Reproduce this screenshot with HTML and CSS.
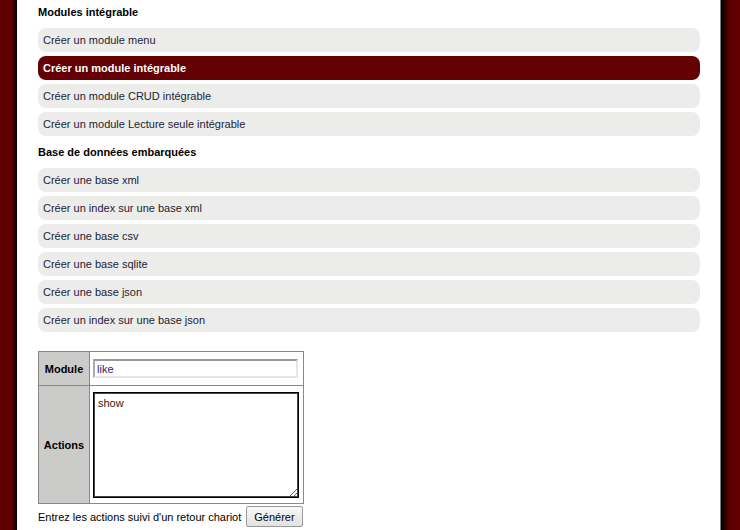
FILE: index.html
```html
<!DOCTYPE html>
<html lang="fr">
  <head>
    <meta charset="utf-8" />
    <title>Modules</title>
    <link rel="stylesheet" href="styles.css">
  </head>
  <body>
    <div class="page">
      <h3>Modules intégrable</h3>
      <ul class="menu">
        <li><a href="#">Créer un module menu</a></li>
        <li class="active"><a href="#">Créer un module intégrable</a></li>
        <li><a href="#">Créer un module CRUD intégrable</a></li>
        <li><a href="#">Créer un module Lecture seule intégrable</a></li>
      </ul>
      <h3>Base de données embarquées</h3>
      <ul class="menu">
        <li><a href="#">Créer une base xml</a></li>
        <li><a href="#">Créer un index sur une base xml</a></li>
        <li><a href="#">Créer une base csv</a></li>
        <li><a href="#">Créer une base sqlite</a></li>
        <li><a href="#">Créer une base json</a></li>
        <li><a href="#">Créer un index sur une base json</a></li>
      </ul>

      <form class="gen-form">
        <table class="form-table">
          <tr class="row-module">
            <th>Module</th>
            <td><input type="text" value="like"></td>
          </tr>
          <tr class="row-actions">
            <th>Actions</th>
            <td><textarea>show</textarea></td>
          </tr>
        </table>
        <div class="form-foot">
          <span>Entrez les actions suivi d'un retour chariot</span>
          <button type="button">Générer</button>
        </div>
      </form>
    </div>
  </body>
</html>
```

FILE: styles.css
```css
html, body {
     margin: 0;
     padding: 0;
     height: 100%;
}

body {
     background: linear-gradient(to right, #600000 0px, #600000 12px, #000 17px, #fff 17px, #fff 720px, #000 721px, #600000 730px, #600000 100%);
     font-family: "Liberation Sans", Arial, sans-serif;
     font-size: 11px;
     color: #1e2233;
     overflow: hidden;
}

.page {
     margin: 0 40px 0 38px;
     padding-top: 5px;
}

h3 {
     margin: 0;
     font-size: 11px;
     font-weight: bold;
     color: #000;
     line-height: 14px;
}

h3 + .menu {
     margin-top: 9px;
}

.menu {
     list-style: none;
     margin: 0 0 9px 0;
     padding: 0;
     display: flex;
     flex-direction: column;
     gap: 4px;
}

.menu li a {
     display: block;
     height: 24px;
     line-height: 24px;
     padding-left: 5px;
     background-color: #ecedeb;
     border-radius: 8px;
     color: #1e2233;
     text-decoration: none;
}

.menu li.active a {
     background-color: #630003;
     color: #fff;
     font-weight: bold;
}

.gen-form {
     margin-top: 19px;
}

.form-table {
     border-collapse: collapse;
     border: 1px solid #888;
     width: 266px;
}

.form-table th {
     background-color: #cbccca;
     border: 1px solid #888;
     width: 50px;
     padding: 0;
     font-weight: bold;
     color: #000;
}

.form-table td {
     border: 1px solid #888;
     padding: 0 2px 0 3px;
     background-color: #fff;
}

.row-module {
     height: 34px;
}

.row-actions {
     height: 118px;
}

.form-table input {
     box-sizing: border-box;
     width: 205px;
     height: 19px;
     border: 2px solid #e6e6e6;
     border-top-color: #999;
     border-left-color: #aaa;
     padding: 0 2px;
     font-family: "Liberation Sans", Arial, sans-serif;
     font-size: 11px;
     color: #1a2a80;
     display: block;
}

.form-table textarea {
     box-sizing: border-box;
     width: 206px;
     height: 106px;
     border: 1px solid #000;
     box-shadow: inset 0 0 0 1px #444;
     padding: 4px;
     font-family: "Liberation Sans", Arial, sans-serif;
     font-size: 11px;
     color: #3a2000;
     display: block;
}

.form-foot {
     display: flex;
     align-items: center;
     gap: 5px;
     margin-top: 2px;
     color: #000;
}

.form-foot button {
     font-family: "Liberation Sans", Arial, sans-serif;
     font-size: 11px;
     height: 21px;
     padding: 0 7px;
     border: 1px solid #999;
     border-radius: 2px;
     background: linear-gradient(#f8f8f8, #e2e2e2);
     color: #000;
}
```
